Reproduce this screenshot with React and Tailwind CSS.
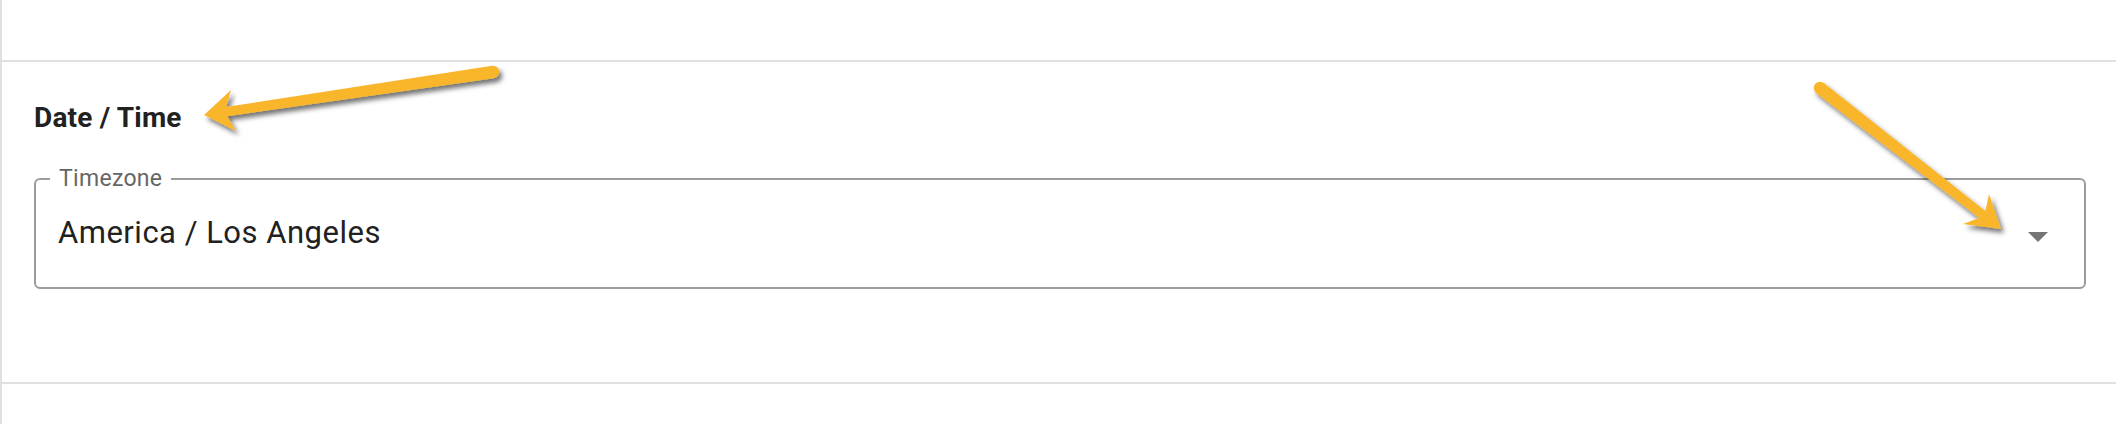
import React from 'react';

// Triangle used by the select, same shape as the material "arrow drop down" icon
const DropArrow = () => (
    <svg width="48" height="48" viewBox="0 0 24 24" className="mt-[5px] shrink-0" fill="#757575">
        <path d="M7 10l5 5 5-5z" />
    </svg>
);

// yellow annotation arrow: tapered shaft, notched head, soft shadow
const Annotation = ({ tail, tip, w1, w2 }) => {
    const dx = tip[0] - tail[0];
    const dy = tip[1] - tail[1];
    const len = Math.hypot(dx, dy);
    const ux = dx / len;
    const uy = dy / len;
    const nx = -uy;
    const ny = ux;
    const notch = [tip[0] - 21 * ux, tip[1] - 21 * uy];
    const t0 = 6.2;
    const t1 = 4.6;
    const shaft = [
        [tail[0] + nx * t0, tail[1] + ny * t0],
        [notch[0] + nx * t1, notch[1] + ny * t1],
        [notch[0] - nx * t1, notch[1] - ny * t1],
        [tail[0] - nx * t0, tail[1] - ny * t0],
    ].map((p) => p.join(',')).join(' ');
    const head = [tip, w1, notch, w2].map((p) => p.join(',')).join(' ');
    return (
        <g filter="url(#arrowShadow)" fill="#f9b62b">
            <circle cx={tail[0]} cy={tail[1]} r={t0} />
            <polygon points={shaft} />
            <polygon points={head} />
        </g>
    );
};

const App = () => {
    return (
        <div className="relative w-full h-[424px] bg-white border-l-2 border-[#e0e0e0] font-['Roboto',sans-serif] overflow-hidden">
            <div className="h-[62px] border-b-2 border-[#e0e0e0]" />

            <section className="h-[322px] border-b-2 border-[#e0e0e0] pl-[32px] pr-[30px] pt-[40px]">
                <h2 className="text-[28px] leading-[32px] font-bold tracking-[0.2px] text-[#212121]">Date / Time</h2>

                <div className="relative mt-[44px] h-[111px] border-2 border-[#9c9c9c] rounded-[6px] pl-[22px] pr-[22px] flex items-center justify-between">
                    <span className="absolute left-[14px] -top-[13px] px-[9px] bg-white text-[23px] leading-[24px] tracking-[0.3px] text-[#666666]">Timezone</span>
                    <span className="text-[31px] leading-[34px] tracking-[0.5px] text-[#212121] -translate-y-[1px]">America / Los Angeles</span>
                    <DropArrow />
                </div>
            </section>

            <svg className="absolute inset-0 pointer-events-none" width="2116" height="424">
                <defs>
                    <filter id="arrowShadow" x="-20%" y="-20%" width="140%" height="140%">
                        <feDropShadow dx="3" dy="4" stdDeviation="2.5" floodColor="#000" floodOpacity="0.55" />
                    </filter>
                </defs>
                <Annotation tail={[491, 72]} tip={[202, 115]} w1={[229, 90]} w2={[234, 131]} />
                <Annotation tail={[1818, 88]} tip={[1999, 229]} w1={[1987, 194]} w2={[1961, 224]} />
            </svg>
        </div>
    );
};

export default App;
